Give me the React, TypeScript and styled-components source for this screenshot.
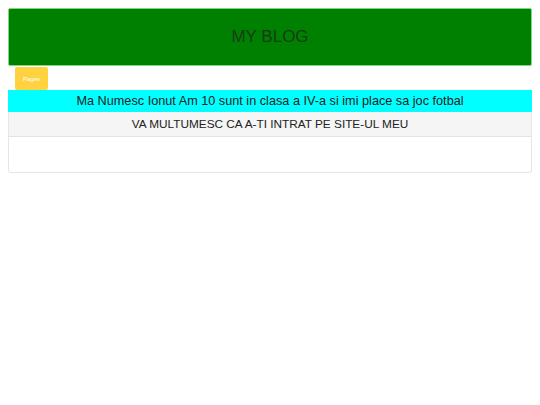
import styled, { createGlobalStyle } from 'styled-components';

const GlobalStyle = createGlobalStyle`
  html, body {
    margin: 0;
    padding: 0;
    background: #fff;
  }
  body {
    padding: 8px;
    font-family: 'Liberation Sans', Arial, sans-serif;
    color: #333;
  }
`;

export default function App() {
  return (
    <>
      <GlobalStyle />
      <Page>
        <Header>
          <HeaderTitle>MY BLOG</HeaderTitle>
        </Header>
        <Nav>
          <PagesButton>Pages</PagesButton>
        </Nav>
        <Intro>Ma Numesc Ionut Am 10 sunt in clasa a IV-a si imi place sa joc fotbal</Intro>
        <Panel>
          <PanelHeading>VA MULTUMESC CA A-TI INTRAT PE SITE-UL MEU</PanelHeading>
          <PanelBody />
        </Panel>
      </Page>
    </>
  );
}

const Page = styled.div({
  width: '524px',
  display: 'flex',
  flexDirection: 'column',
});

const Header = styled.div({
  height: '58px',
  background: '#008000',
  border: '1px solid #7fd77f',
  borderRadius: '2px',
  boxSizing: 'border-box',
  display: 'flex',
  alignItems: 'center',
  justifyContent: 'center',
});

const HeaderTitle = styled.h1({
  margin: 0,
  fontSize: '17px',
  fontWeight: 400,
  color: '#143d14',
});

const Nav = styled.div({
  display: 'flex',
  paddingLeft: '7px',
  paddingTop: '1px',
});

const PagesButton = styled.button({
  width: '33px',
  height: '23px',
  padding: 0,
  border: 'none',
  borderRadius: '2px',
  background: '#ffd23f',
  color: '#fff',
  fontFamily: "'Liberation Sans', Arial, sans-serif",
  fontSize: '6px',
});

const Intro = styled.div({
  height: '22px',
  background: '#00ffff',
  fontSize: '12.7px',
  lineHeight: '22px',
  textAlign: 'center',
  color: '#222',
});

const Panel = styled.div({
  border: '1px solid #e6e6e6',
  borderTop: 'none',
  borderRadius: '0 0 3px 3px',
});

const PanelHeading = styled.div({
  height: '24px',
  background: '#f5f5f5',
  borderBottom: '1px solid #e3e3e3',
  fontSize: '11.8px',
  lineHeight: '24px',
  textAlign: 'center',
  color: '#222',
});

const PanelBody = styled.div({
  height: '35px',
});
